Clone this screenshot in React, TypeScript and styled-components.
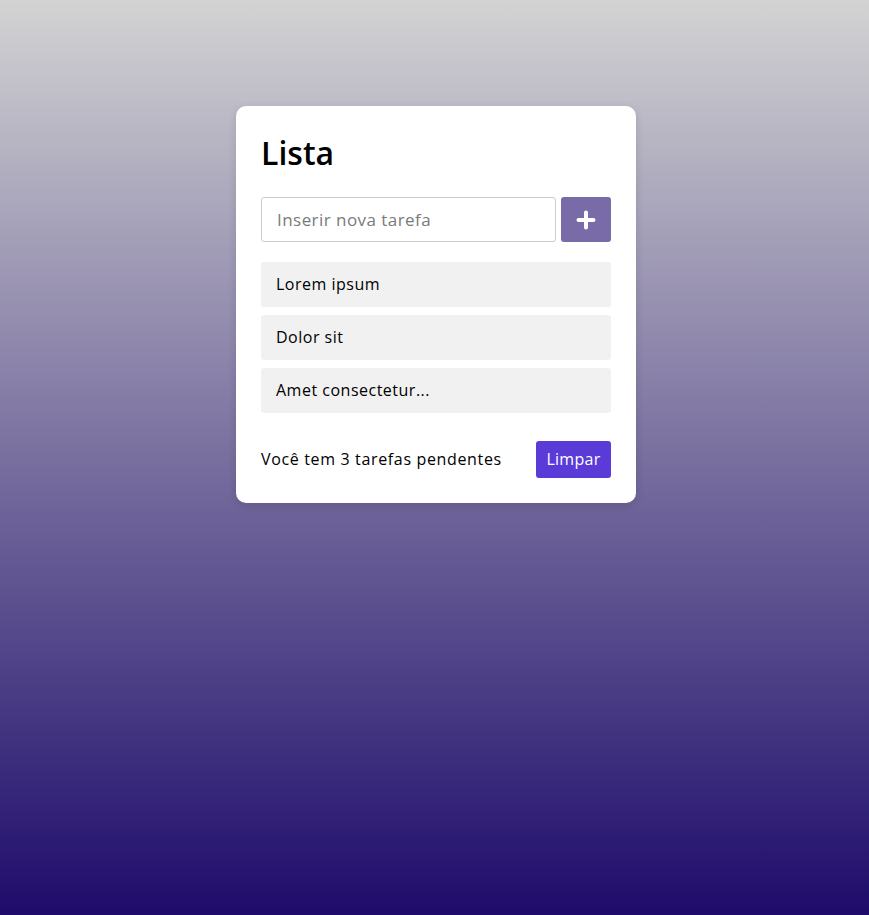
import React from "react";
import styled, { createGlobalStyle } from "styled-components";

const Global = createGlobalStyle`
  html, body { margin: 0; padding: 0; }
  body {
    font-family: "Open Sans", "Noto Sans", sans-serif;
    background: linear-gradient(to bottom, #d3d3d3, #1e0b6b);
    min-height: 100vh;
  }
  * { box-sizing: border-box; }
`;

const Page = styled.div`
  min-height: 100vh;
  display: flex;
  justify-content: center;
  align-items: flex-start;
  padding: 106px 0 0 3px;
`;

const Card = styled.div`
  width: 400px;
  background: #ffffff;
  border-radius: 10px;
  padding: 25px;
  box-shadow: 0 3px 10px rgba(0, 0, 0, 0.12);
`;

const Title = styled.h1`
  margin: 0 0 23px;
  font-size: 32px;
  font-weight: 600;
  line-height: 43px;
  color: #000;
`;

const InputRow = styled.div`
  display: flex;
  gap: 5px;
`;

const TaskInput = styled.input`
  flex: 1;
  height: 45px;
  border: 1px solid #cccccc;
  border-radius: 3px;
  padding: 0 15px;
  font-family: inherit;
  font-size: 17px;
  letter-spacing: 0.45px;
  color: #333;
  outline: none;
  &::placeholder { color: #7a7a7a; }
`;

const AddButton = styled.button`
  width: 50px;
  height: 45px;
  border: none;
  border-radius: 3px;
  background: #786ba8;
  display: flex;
  align-items: center;
  justify-content: center;
  padding: 0;
  cursor: pointer;
`;

const List = styled.ul`
  list-style: none;
  margin: 20px 0 0;
  padding: 0;
  display: flex;
  flex-direction: column;
  gap: 8px;
`;

const Item = styled.li`
  height: 45px;
  background: #f1f1f1;
  border-radius: 3px;
  padding: 0 15px 2px;
  display: flex;
  align-items: center;
  font-size: 16px;
  letter-spacing: 0.5px;
  color: #000;
`;

const Footer = styled.div`
  margin-top: 28px;
  display: flex;
  align-items: center;
  justify-content: space-between;
`;

const Pending = styled.span`
  font-size: 16px;
  letter-spacing: 0.65px;
  color: #000;
  padding-bottom: 2px;
`;

const ClearButton = styled.button`
  width: 75px;
  height: 37px;
  border: none;
  border-radius: 3px;
  background: #5b3bd8;
  color: #fff;
  font-family: inherit;
  font-size: 16px;
  letter-spacing: 0.3px;
  padding: 0 0 2px;
  cursor: pointer;
`;

const PlusIcon = () => (
  <svg width="20" height="20" viewBox="0 0 20 20">
    <path d="M10 2.5v15M2.5 10h15" stroke="#fff" strokeWidth="4" strokeLinecap="round" />
  </svg>
);

const tasks = ["Lorem ipsum", "Dolor sit", "Amet consectetur..."];

export default function App() {
  return (
    <>
      <Global />
      <Page>
        <Card>
          <Title>Lista</Title>
          <InputRow>
            <TaskInput placeholder="Inserir nova tarefa" />
            <AddButton aria-label="Adicionar">
              <PlusIcon />
            </AddButton>
          </InputRow>
          <List>
            {tasks.map((t) => (
              <Item key={t}>{t}</Item>
            ))}
          </List>
          <Footer>
            <Pending>Você tem {tasks.length} tarefas pendentes</Pending>
            <ClearButton>Limpar</ClearButton>
          </Footer>
        </Card>
      </Page>
    </>
  );
}
